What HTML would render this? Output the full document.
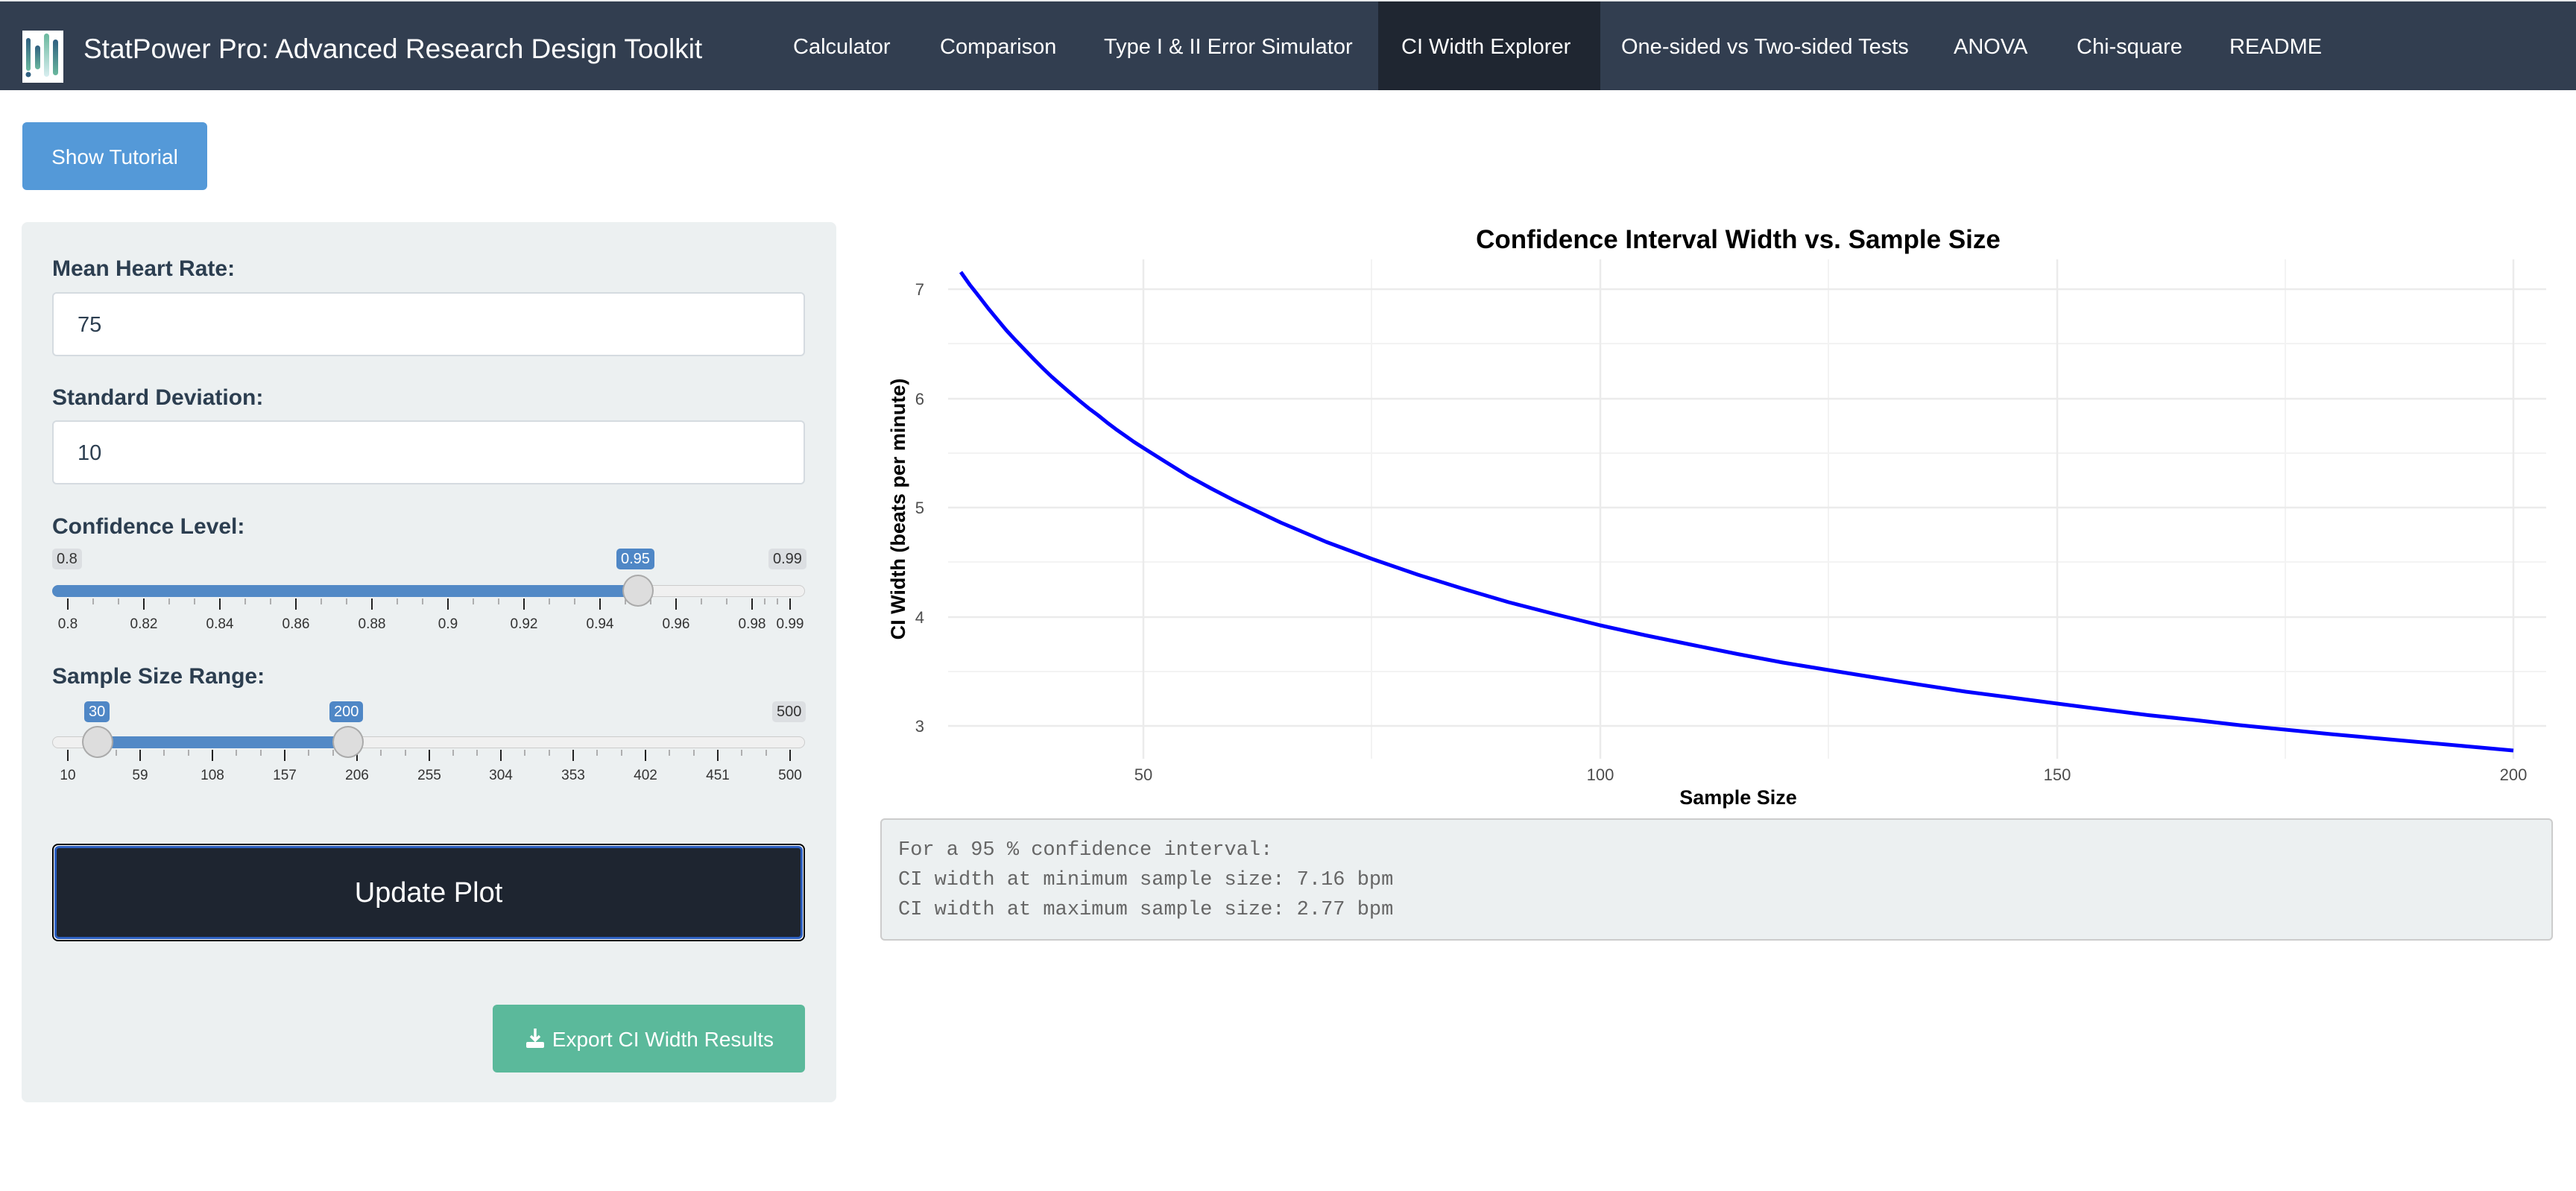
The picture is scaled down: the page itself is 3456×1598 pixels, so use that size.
<!DOCTYPE html>
<html><head><meta charset="utf-8">
<style>
*{box-sizing:border-box;margin:0;padding:0}
body{width:3456px;height:1598px;background:#fff;font-family:"Liberation Sans",sans-serif;position:relative;overflow:hidden}
.abs{position:absolute}
.nav{left:0;top:2px;width:3456px;height:119px;background:#323e50}
.navtxt{position:absolute;top:4px;height:119px;line-height:119px;color:#fff;font-size:29px;white-space:nowrap}
.lbl{position:absolute;left:70px;font-size:30px;font-weight:bold;color:#2c3e50}
.inp{position:absolute;left:70px;width:1010px;height:86px;background:#fff;border:2px solid #d5dbe0;border-radius:6px;font-size:29px;color:#2c3e50;padding-left:32px;line-height:84px}
.badge{position:absolute;height:28px;line-height:28px;font-size:20px;padding:0 6px;border-radius:5px;background:#dcdfe2;color:#333}
.badge.b{background:#4f87c6;color:#fff}
.tl{position:absolute;font-size:19px;color:#333;transform:translateX(-50%)}
.ticks{position:absolute;left:0;width:1200px}
</style></head><body>
<div class="abs" style="left:0;top:0;width:3456px;height:2px;background:#e6e8ea"></div>
<div class="abs nav"></div>
<svg class="abs" style="left:30px;top:41px" width="55" height="70" viewBox="0 0 55 70">
<defs><linearGradient id="g" x1="0" y1="0" x2="0" y2="1"><stop offset="0" stop-color="#2f5f80"/><stop offset="1" stop-color="#6ab89e"/></linearGradient>
<linearGradient id="g2" x1="0" y1="0" x2="0" y2="1"><stop offset="0" stop-color="#6ab89e"/><stop offset="1" stop-color="#d8eef0"/></linearGradient></defs>
<rect width="55" height="70" fill="#fff"/>
<rect x="5" y="10" width="6" height="44" rx="3" fill="url(#g)"/>
<circle cx="8" cy="59" r="3.5" fill="#2f5f80"/>
<rect x="17" y="20" width="7" height="32" rx="3.5" fill="url(#g)"/>
<rect x="29" y="4" width="7" height="58" rx="3.5" fill="url(#g2)"/>
<rect x="41" y="12" width="7" height="48" rx="3.5" fill="url(#g)"/>
</svg>
<div class="navtxt" style="left:112px;font-size:37px;top:6px">StatPower Pro: Advanced Research Design Toolkit</div>
<div class="abs" style="left:1849px;top:2px;width:298px;height:119px;background:#1f2631"></div>
<div class="navtxt" style="left:1064px">Calculator</div>
<div class="navtxt" style="left:1261px">Comparison</div>
<div class="navtxt" style="left:1481px">Type I &amp; II Error Simulator</div>
<div class="navtxt" style="left:1880px">CI Width Explorer</div>
<div class="navtxt" style="left:2175px">One-sided vs Two-sided Tests</div>
<div class="navtxt" style="left:2621px">ANOVA</div>
<div class="navtxt" style="left:2786px">Chi-square</div>
<div class="navtxt" style="left:2991px">README</div>

<div class="abs" style="left:30px;top:164px;width:248px;height:91px;background:#5499d8;border-radius:6px;color:#fff;font-size:28px;text-align:center;line-height:93px">Show Tutorial</div>

<div class="abs" style="left:29px;top:298px;width:1093px;height:1181px;background:#ecf0f1;border-radius:8px"></div>
<div class="lbl" style="top:344px">Mean Heart Rate:</div>
<div class="inp" style="top:392px">75</div>
<div class="lbl" style="top:517px">Standard Deviation:</div>
<div class="inp" style="top:564px">10</div>
<div class="lbl" style="top:690px">Confidence Level:</div>

<!-- slider 1 -->
<div class="badge" style="left:70px;top:736px">0.8</div>
<div class="badge b" style="left:827px;top:736px">0.95</div>
<div class="badge" style="left:1031px;top:736px">0.99</div>
<div class="abs" style="left:70px;top:785px;width:1010px;height:16px;border-radius:8px;background:#f0f0f0;border:1px solid #ccc"></div>
<div class="abs" style="left:70px;top:785px;width:786px;height:16px;border-radius:8px 0 0 8px;background:#5289c6"></div>
<svg class="ticks" style="top:801px" height="40" width="1200">
<g stroke="#222" stroke-width="2">
<line x1="91" y1="2" x2="91" y2="17"/><line x1="193" y1="2" x2="193" y2="17"/><line x1="295" y1="2" x2="295" y2="17"/><line x1="397" y1="2" x2="397" y2="17"/><line x1="499" y1="2" x2="499" y2="17"/><line x1="601" y1="2" x2="601" y2="17"/><line x1="703" y1="2" x2="703" y2="17"/><line x1="805" y1="2" x2="805" y2="17"/><line x1="907" y1="2" x2="907" y2="17"/><line x1="1009" y1="2" x2="1009" y2="17"/><line x1="1060" y1="2" x2="1060" y2="17"/></g>
<g stroke="#999" stroke-width="1.5">
<line x1="125" y1="2" x2="125" y2="10"/><line x1="159" y1="2" x2="159" y2="10"/><line x1="227" y1="2" x2="227" y2="10"/><line x1="261" y1="2" x2="261" y2="10"/><line x1="329" y1="2" x2="329" y2="10"/><line x1="363" y1="2" x2="363" y2="10"/><line x1="431" y1="2" x2="431" y2="10"/><line x1="465" y1="2" x2="465" y2="10"/><line x1="533" y1="2" x2="533" y2="10"/><line x1="567" y1="2" x2="567" y2="10"/><line x1="635" y1="2" x2="635" y2="10"/><line x1="669" y1="2" x2="669" y2="10"/><line x1="737" y1="2" x2="737" y2="10"/><line x1="771" y1="2" x2="771" y2="10"/><line x1="839" y1="2" x2="839" y2="10"/><line x1="873" y1="2" x2="873" y2="10"/><line x1="941" y1="2" x2="941" y2="10"/><line x1="975" y1="2" x2="975" y2="10"/><line x1="1043" y1="2" x2="1043" y2="10"/><line x1="1026" y1="2" x2="1026" y2="10"/></g></svg>
<div class="tl" style="left:91px;top:827px">0.8</div><div class="tl" style="left:193px;top:827px">0.82</div><div class="tl" style="left:295px;top:827px">0.84</div><div class="tl" style="left:397px;top:827px">0.86</div><div class="tl" style="left:499px;top:827px">0.88</div><div class="tl" style="left:601px;top:827px">0.9</div><div class="tl" style="left:703px;top:827px">0.92</div><div class="tl" style="left:805px;top:827px">0.94</div><div class="tl" style="left:907px;top:827px">0.96</div><div class="tl" style="left:1009px;top:827px">0.98</div><div class="tl" style="left:1060px;top:827px">0.99</div>
<div class="abs" style="left:835px;top:771px;width:42px;height:43px;border-radius:50%;background:#ddd;border:2px solid #aaa"></div>

<div class="lbl" style="top:891px">Sample Size Range:</div>
<!-- slider 2 -->
<div class="badge b" style="left:113px;top:941px">30</div>
<div class="badge b" style="left:442px;top:941px">200</div>
<div class="badge" style="left:1036px;top:941px">500</div>
<div class="abs" style="left:70px;top:988px;width:1010px;height:16px;border-radius:8px;background:#f0f0f0;border:1px solid #ccc"></div>
<div class="abs" style="left:131px;top:988px;width:336px;height:16px;background:#5289c6"></div>
<svg class="ticks" style="top:1004px" height="40" width="1200">
<g stroke="#222" stroke-width="2">
<line x1="91" y1="2" x2="91" y2="17"/><line x1="188" y1="2" x2="188" y2="17"/><line x1="285" y1="2" x2="285" y2="17"/><line x1="382" y1="2" x2="382" y2="17"/><line x1="479" y1="2" x2="479" y2="17"/><line x1="576" y1="2" x2="576" y2="17"/><line x1="672" y1="2" x2="672" y2="17"/><line x1="769" y1="2" x2="769" y2="17"/><line x1="866" y1="2" x2="866" y2="17"/><line x1="963" y1="2" x2="963" y2="17"/><line x1="1060" y1="2" x2="1060" y2="17"/></g>
<g stroke="#999" stroke-width="1.5">
<line x1="123" y1="2" x2="123" y2="10"/><line x1="156" y1="2" x2="156" y2="10"/><line x1="220" y1="2" x2="220" y2="10"/><line x1="253" y1="2" x2="253" y2="10"/><line x1="317" y1="2" x2="317" y2="10"/><line x1="350" y1="2" x2="350" y2="10"/><line x1="414" y1="2" x2="414" y2="10"/><line x1="447" y1="2" x2="447" y2="10"/><line x1="511" y1="2" x2="511" y2="10"/><line x1="544" y1="2" x2="544" y2="10"/><line x1="608" y1="2" x2="608" y2="10"/><line x1="640" y1="2" x2="640" y2="10"/><line x1="704" y1="2" x2="704" y2="10"/><line x1="737" y1="2" x2="737" y2="10"/><line x1="801" y1="2" x2="801" y2="10"/><line x1="834" y1="2" x2="834" y2="10"/><line x1="898" y1="2" x2="898" y2="10"/><line x1="931" y1="2" x2="931" y2="10"/><line x1="995" y1="2" x2="995" y2="10"/><line x1="1028" y1="2" x2="1028" y2="10"/></g></svg>
<div class="tl" style="left:91px;top:1030px">10</div><div class="tl" style="left:188px;top:1030px">59</div><div class="tl" style="left:285px;top:1030px">108</div><div class="tl" style="left:382px;top:1030px">157</div><div class="tl" style="left:479px;top:1030px">206</div><div class="tl" style="left:576px;top:1030px">255</div><div class="tl" style="left:672px;top:1030px">304</div><div class="tl" style="left:769px;top:1030px">353</div><div class="tl" style="left:866px;top:1030px">402</div><div class="tl" style="left:963px;top:1030px">451</div><div class="tl" style="left:1060px;top:1030px">500</div>
<div class="abs" style="left:110px;top:974px;width:42px;height:43px;border-radius:50%;background:#ddd;border:2px solid #aaa"></div>
<div class="abs" style="left:446px;top:974px;width:42px;height:43px;border-radius:50%;background:#ddd;border:2px solid #aaa"></div>

<div class="abs" style="left:70px;top:1132px;width:1010px;height:131px;border:2px solid #000;border-radius:8px;background:#fff;padding:1px">
<div style="width:100%;height:100%;background:#1e2530;border:3px solid #2c5fc0;border-radius:6px;color:#fff;font-size:38px;text-align:center;line-height:121px">Update Plot</div></div>

<div class="abs" style="left:661px;top:1348px;width:419px;height:91px;background:#5bb99b;border-radius:6px;color:#fff;font-size:28px;text-align:center;line-height:93px">
<svg width="30" height="30" viewBox="0 0 30 30" style="vertical-align:-4px"><path d="M15 2V18M9 12L15 18L21 12" stroke="#fff" stroke-width="3.5" fill="none"/><rect x="3" y="20" width="24" height="8" rx="2" fill="#fff"/></svg> Export CI Width Results</div>

<!-- plot -->
<div class="abs" style="left:1272px;top:302px;width:2120px;text-align:center;font-size:35px;font-weight:bold;color:#000">Confidence Interval Width vs. Sample Size</div>
<svg class="abs" style="left:0;top:0" width="3456" height="1100">
<g stroke="#f3f3f3" stroke-width="2">
<line x1="1272" y1="461" x2="3416" y2="461"/><line x1="1272" y1="608" x2="3416" y2="608"/><line x1="1272" y1="754" x2="3416" y2="754"/><line x1="1272" y1="901" x2="3416" y2="901"/>
<line x1="1840" y1="348" x2="1840" y2="1018"/><line x1="2453" y1="348" x2="2453" y2="1018"/><line x1="3066" y1="348" x2="3066" y2="1018"/></g>
<g stroke="#ebebeb" stroke-width="2.5">
<line x1="1272" y1="388" x2="3416" y2="388"/><line x1="1272" y1="535" x2="3416" y2="535"/><line x1="1272" y1="681" x2="3416" y2="681"/><line x1="1272" y1="828" x2="3416" y2="828"/><line x1="1272" y1="974" x2="3416" y2="974"/>
<line x1="1534" y1="348" x2="1534" y2="1018"/><line x1="2147" y1="348" x2="2147" y2="1018"/><line x1="2760" y1="348" x2="2760" y2="1018"/><line x1="3372" y1="348" x2="3372" y2="1018"/></g>
<polyline fill="none" stroke="#0000ff" stroke-width="5" stroke-linejoin="round" points="1289,365 1301,382 1313.9,398.3 1326,414 1338,428.6 1350,443 1362.4,456.4 1375,469.5 1386.9,481.9 1399,494 1411,505.5 1423.5,516.5 1436,527.3 1448,537.5 1460.5,547.7 1473,557 1485,566.7 1497,575.8 1509.5,584.6 1521.5,593 1534,601 1565,620.5 1595,639.1 1626,656 1657,672 1718,701 1779,727 1841,750 1902,771 1963,790 2024,808 2086,824 2147,839 2208,852.5 2269,865 2331,877.5 2392,889 2453,899 2515,909 2576,918.7 2637,928 2699,936 2760,944 2821,951.8 2882,959.5 2944,966 3005,973 3066,979 3127,985 3188,990.5 3250,996 3311,1001.5 3372,1007"/>
<g font-family="Liberation Sans" font-size="22" fill="#4d4d4d" text-anchor="end">
<text x="1240" y="396">7</text><text x="1240" y="543">6</text><text x="1240" y="689">5</text><text x="1240" y="836">4</text><text x="1240" y="982">3</text></g>
<g font-family="Liberation Sans" font-size="22" fill="#4d4d4d" text-anchor="middle">
<text x="1534" y="1047">50</text><text x="2147" y="1047">100</text><text x="2760" y="1047">150</text><text x="3372" y="1047">200</text></g>
<text x="2332" y="1079" font-family="Liberation Sans" font-size="27" font-weight="bold" text-anchor="middle">Sample Size</text>
<text transform="translate(1214,683) rotate(-90)" font-family="Liberation Sans" font-size="27" font-weight="bold" text-anchor="middle">CI Width (beats per minute)</text>
</svg>

<div class="abs" style="left:1181px;top:1098px;width:2244px;height:164px;background:#ecf0f1;border:2px solid #ccc;border-radius:6px;padding:21px 22px;font-family:'Liberation Mono',monospace;font-size:27px;line-height:40px;color:#666;white-space:pre">For a 95 % confidence interval:
CI width at minimum sample size: 7.16 bpm
CI width at maximum sample size: 2.77 bpm</div>
</body></html>
